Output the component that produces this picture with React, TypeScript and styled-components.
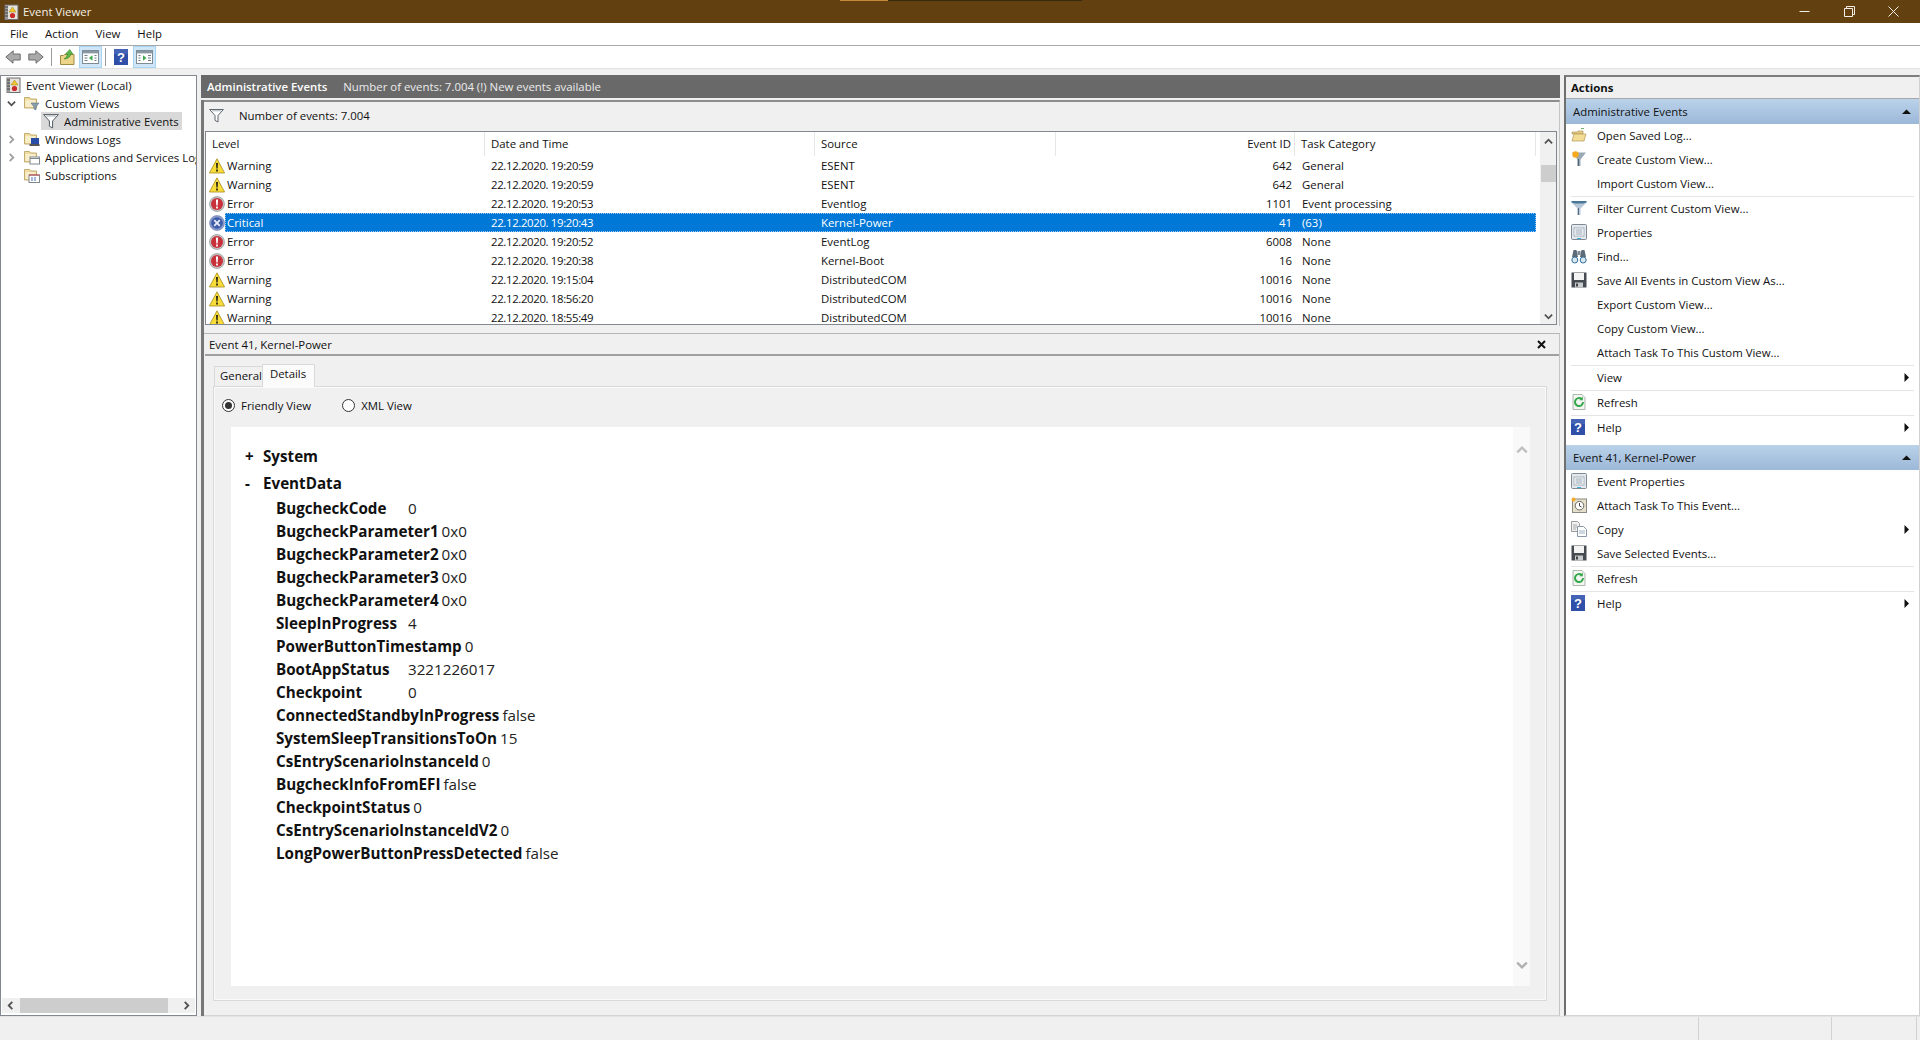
import React from "react";
import styled, { createGlobalStyle } from "styled-components";

const FONT = `"Open Sans", "Noto Sans", "Liberation Sans", sans-serif`;

const GlobalStyle = createGlobalStyle`
  html, body { margin: 0; padding: 0; height: 100%; background: #f0f0f0; overflow: hidden; }
  #root { height: 100%; }
  * { box-sizing: border-box; }
  body { font-family: ${FONT}; font-size: 11.4px; color: #111; }
  svg { display: block; flex: none; }
`;

const Page = styled.div`
  display: flex;
  flex-direction: column;
  height: 1040px;
  width: 1920px;
`;

/* ---- title bar ---- */
const TitleBar = styled.div`
  position: relative;
  flex: none;
  height: 23px;
  background: #63400f;
  color: #f4efe6;
  display: flex;
  align-items: center;
  padding: 0 4px;
  gap: 4px;
`;
const TitleStripe = styled.div<{ $left: number; $width: number; $color: string }>`
  position: absolute;
  top: 0;
  left: ${(p) => p.$left}px;
  width: ${(p) => p.$width}px;
  height: 1px;
  background: ${(p) => p.$color};
`;
const TitleText = styled.span`
  flex: 1;
`;
const WinButtons = styled.div`
  display: flex;
`;
const WinButton = styled.div`
  width: 44.5px;
  height: 23px;
  display: flex;
  align-items: center;
  justify-content: center;
`;

/* ---- menu + toolbar ---- */
const MenuBar = styled.div`
  flex: none;
  height: 23px;
  background: #fff;
  border-bottom: 1px solid #a9a9a9;
  display: flex;
  align-items: center;
  padding: 0 0 2px 3px;
`;
const MenuItem = styled.div`
  padding: 0 7px;
  margin-right: 3px;
`;
const Toolbar = styled.div`
  flex: none;
  height: 23px;
  background: #fff;
  border-bottom: 1px solid #e2e2e2;
  display: flex;
  align-items: center;
  padding-left: 1.5px;
`;
const ToolButton = styled.div<{ $on?: boolean }>`
  width: 23px;
  height: 22px;
  display: flex;
  align-items: center;
  justify-content: center;
  background: ${(p) => (p.$on ? "#cfe6f8" : "transparent")};
  border: 1px solid ${(p) => (p.$on ? "#a9d4f2" : "transparent")};
`;
const ToolSep = styled.div`
  width: 1px;
  height: 18px;
  background: #9a9a9a;
  margin: 0 4px 0 3px;
`;

/* ---- main ---- */
const Body = styled.div`
  flex: 1;
  min-height: 0;
  display: grid;
  grid-template-columns: 197px 1359px 354px;
  column-gap: 4px;
  padding-top: 6px;
`;

/* ---- tree ---- */
const TreePanel = styled.div`
  background: #fff;
  border: 1px solid #828790;
  display: flex;
  flex-direction: column;
  overflow: hidden;
`;
const TreeList = styled.div`
  flex: 1;
`;
const TreeRow = styled.div<{ $indent: number }>`
  height: 18px;
  display: flex;
  align-items: center;
  padding-left: ${(p) => p.$indent}px;
  white-space: nowrap;
`;
const TreeArrow = styled.div`
  flex: none;
  width: 13px;
  display: flex;
  justify-content: center;
  margin-right: 4px;
`;
const TreeLabel = styled.div<{ $sel?: boolean }>`
  flex: none;
  display: flex;
  align-items: center;
  gap: 5px;
  height: 18px;
  padding: 0 3px 0 2px;
  background: ${(p) => (p.$sel ? "#d9d9d9" : "transparent")};
`;
const HScroll = styled.div`
  flex: none;
  height: 15px;
  margin: 0 1px 2px;
  background: #f0f0f0;
  display: flex;
  align-items: center;
  justify-content: space-between;
  padding: 0 4px;
`;
const HThumb = styled.div`
  width: 148px;
  height: 15px;
  background: #cdcdcd;
  margin-right: 9px;
`;

/* ---- centre ---- */
const Center = styled.div`
  display: flex;
  flex-direction: column;
  min-height: 0;
`;
const CenterHead = styled.div`
  flex: none;
  height: 23px;
  background: #696969;
  color: #ececec;
  display: flex;
  align-items: center;
  padding-left: 6px;
  gap: 16px;
`;
const HeadTitle = styled.b`
  color: #fff;
  font-weight: 600;
`;
const CenterStack = styled.div`
  flex: 1;
  min-height: 0;
  margin-top: 2px;
  border-left: 3px solid #777;
  display: flex;
  flex-direction: column;
`;
const ListPane = styled.div`
  flex: none;
  height: 226px;
  border-top: 2px solid #8d8d8d;
  border-right: 1px solid #c4c4c4;
  padding-left: 1px;
  background: #f0f0f0;
`;
const FilterBar = styled.div`
  height: 29px;
  display: flex;
  align-items: center;
  padding: 0 0 2px 4px;
  gap: 15px;
`;
const ListFrame = styled.div`
  height: 194px;
  margin-right: 2px;
  border: 1px solid #828790;
  background: #fff;
  display: flex;
  overflow: hidden;
`;
const ListMain = styled.div`
  flex: 1;
  min-width: 0;
`;
const HeaderRow = styled.div`
  height: 24px;
  display: grid;
  grid-template-columns: 279px 330px 241px 239px 1fr;
`;
const HeaderCell = styled.div<{ $right?: boolean }>`
  display: flex;
  align-items: center;
  justify-content: ${(p) => (p.$right ? "flex-end" : "flex-start")};
  padding: 0 ${(p) => (p.$right ? "3px" : "0")} 2px 6px;
  border-right: 1px solid #e6e6e6;
`;
const EventRow = styled.div`
  height: 19px;
  display: flex;
  align-items: center;
  padding-left: 3px;
  width: 1330px;
`;
const EventBody = styled.div<{ $sel?: boolean }>`
  flex: 1;
  height: 19px;
  display: grid;
  grid-template-columns: 259px 330px 240px 241px 1fr;
  align-items: center;
  padding-bottom: 1px;
  color: ${(p) => (p.$sel ? "#fff" : "#111")};
  background: ${(p) => (p.$sel ? "#0078d7" : "transparent")};
  outline: ${(p) => (p.$sel ? "1px dotted #9cc8ee" : "none")};
  outline-offset: -1px;
`;
const LevelIcon = styled.div`
  width: 16px;
`;
const Cell = styled.div<{ $right?: boolean; $first?: boolean; $tight?: boolean }>`
  padding: 0 ${(p) => (p.$right ? "3px" : "0")} 0 ${(p) => (p.$first ? "2px" : "7px")};
  text-align: ${(p) => (p.$right ? "right" : "left")};
  letter-spacing: ${(p) => (p.$tight ? "-0.35px" : "0")};
  white-space: nowrap;
`;
const VTrack = styled.div`
  flex: none;
  width: 16px;
  background: #f0f0f0;
  display: flex;
  flex-direction: column;
  align-items: center;
  margin-left: 4px;
  padding-top: 5px;
`;
const VThumb = styled.div`
  width: 15px;
  height: 17px;
  background: #cdcdcd;
  margin-top: 19px;
`;
const VEnd = styled.div`
  margin-top: auto;
  margin-bottom: 3px;
`;

const PreviewPane = styled.div`
  flex: 1;
  min-height: 0;
  margin-top: 7px;
  border-top: 1px solid #b5b5b5;
  border-right: 1px solid #c4c4c4;
  border-bottom: 1px solid #d4d4d4;
  padding-left: 1px;
  display: flex;
  flex-direction: column;
`;
const PreviewHead = styled.div`
  flex: none;
  height: 22px;
  border-bottom: 2px solid #a0a0a0;
  display: flex;
  align-items: center;
  justify-content: space-between;
  padding: 0 13px 0 4px;
`;
const Tabs = styled.div`
  flex: none;
  height: 30px;
  padding: 7px 0 0 9px;
  display: flex;
  align-items: flex-end;
`;
const Tab = styled.div<{ $on?: boolean }>`
  height: ${(p) => (p.$on ? 23 : 21)}px;
  padding: ${(p) => (p.$on ? "0 8px 6px 7px" : "0 0 3px 5px")};
  background: ${(p) => (p.$on ? "#fbfbfb" : "#f0f0f0")};
  border: 1px solid #d9d9d9;
  border-bottom: ${(p) => (p.$on ? "none" : "1px solid #d9d9d9")};
  border-right: ${(p) => (p.$on ? "1px solid #d9d9d9" : "none")};
  display: flex;
  align-items: center;
  position: relative;
  top: 1px;
`;
const TabBody = styled.div`
  flex: 1;
  min-height: 0;
  margin: 0 12px 14px 8px;
  border: 1px solid #d9d9d9;
  box-shadow: inset 0 0 0 1px #fafafa;
  padding: 0 16px 14px 0;
  display: flex;
  flex-direction: column;
`;
const RadioRow = styled.div`
  flex: none;
  height: 40px;
  padding: 0 0 4px 8px;
  display: flex;
  align-items: center;
`;
const Radio = styled.label`
  display: flex;
  align-items: center;
  gap: 6px;
  margin-right: 31px;
`;
const RadioDot = styled.span<{ $on?: boolean }>`
  width: 13px;
  height: 13px;
  border-radius: 50%;
  border: 1px solid #333;
  background: #fff;
  display: flex;
  align-items: center;
  justify-content: center;
  &::after {
    content: "";
    width: 7px;
    height: 7px;
    border-radius: 50%;
    background: ${(p) => (p.$on ? "#333" : "transparent")};
  }
`;
const DetailBox = styled.div`
  flex: 1;
  min-height: 0;
  margin-left: 17px;
  background: #fff;
  display: flex;
`;
const DetailContent = styled.div`
  flex: 1;
  padding: 17px 0 0 14px;
`;
const DetailScroll = styled.div`
  flex: none;
  width: 17px;
  background: #f9f9f9;
  display: flex;
  flex-direction: column;
  align-items: center;
  justify-content: space-between;
  padding: 17px 0 15px;
`;
const Section = styled.div<{ $top?: number }>`
  display: flex;
  align-items: center;
  height: 23px;
  margin-top: ${(p) => p.$top ?? 0}px;
  font-size: 15.2px;
  font-weight: 700;
`;
const Sign = styled.span`
  width: 18px;
`;
const DataRows = styled.div`
  padding: 2px 0 0 31px;
`;
const DataRow = styled.div`
  height: 23px;
  display: flex;
  align-items: center;
  font-size: 15.2px;
  white-space: nowrap;
`;
const DataName = styled.span`
  min-width: 129px;
  margin-right: 3px;
  font-weight: 700;
`;
const DataValue = styled.span`
  color: #222;
`;

/* ---- actions ---- */
const ActionsPanel = styled.div`
  border-left: 2px solid #6f6f6f;
  border-top: 2px solid #7d7d7d;
  border-bottom: 1px solid #d4d4d4;
  border-right: 1px solid #d0d0d0;
  background: #fff;
  display: flex;
  flex-direction: column;
  margin-right: -2px;
`;
const ActionsHead = styled.div`
  flex: none;
  height: 22px;
  background: #f0f0f0;
  border-bottom: 1px solid #a8a8a8;
  display: flex;
  align-items: center;
  padding-left: 5px;
  font-weight: 700;
`;
const GroupHead = styled.div`
  flex: none;
  height: 25px;
  background: linear-gradient(#bad2ea, #9cb8d8);
  display: flex;
  align-items: center;
  justify-content: space-between;
  padding: 0 8px 1px 7px;
`;
const ActionRow = styled.div`
  flex: none;
  height: 24px;
  display: flex;
  align-items: center;
  padding: 0 8px 2px 5px;
`;
const ActionIcon = styled.div`
  width: 26px;
`;
const ActionText = styled.div`
  flex: 1;
`;
const ActionSep = styled.div`
  flex: none;
  height: 1px;
  margin: 0 5px;
  background: #e5e5e5;
`;
const GroupGap = styled.div`
  flex: none;
  height: 5px;
`;

/* ---- status ---- */
const StatusBar = styled.div`
  flex: none;
  height: 24px;
  background: #f0f0f0;
  border-top: 1px solid #e3e3e3;
  display: grid;
  grid-template-columns: 1699px 133px 85px 3px;
`;
const StatusCell = styled.div`
  border-right: 1px solid #d2d2d2;
`;

/* ---- icons ---- */
const Warning = () => (
  <svg width="16" height="16" viewBox="0 0 16 16">
    <path d="M8 .8 15.6 15H.4z" fill="#f7dc3a" stroke="#a58a1c" strokeWidth=".8" strokeLinejoin="round" />
    <path d="M7.1 5h1.8l-.3 5.6H7.4zM7.2 11.6h1.6v1.8H7.2z" fill="#111" />
  </svg>
);
const ErrorIco = () => (
  <svg width="16" height="16" viewBox="0 0 16 16">
    <circle cx="8" cy="8" r="7.5" fill="#c4c4c4" stroke="#8a8a8a" strokeWidth=".6" />
    <circle cx="8" cy="8" r="6" fill="#c8303a" />
    <path d="M6.9 3.4h2.2L8.7 9.5H7.3zM7.1 10.5h1.8v1.9H7.1z" fill="#fff" />
  </svg>
);
const Critical = () => (
  <svg width="16" height="16" viewBox="0 0 16 16">
    <circle cx="8" cy="8" r="7.5" fill="#8a9ccc" stroke="#6f7fa8" strokeWidth=".6" />
    <circle cx="8" cy="8" r="5.8" fill="#3f5caa" />
    <path d="M5.2 5.2l5.6 5.6M10.8 5.2l-5.6 5.6" stroke="#e8ecf6" strokeWidth="1.8" />
  </svg>
);
const AppIco = () => (
  <svg width="15" height="16" viewBox="0 0 15 16">
    <rect x="1" y="1" width="13" height="14.5" fill="#e4e2da" stroke="#6d6d6d" />
    <path d="M1 1h3v14.5H1z" fill="#9a9a9a" />
    <path d="M1 3h3M1 6h3M1 9h3M1 12h3" stroke="#444" />
    <path d="M8.5 3 12 8H5z" fill="#f2c72e" stroke="#9b7f1a" strokeWidth=".5" />
    <circle cx="8.5" cy="11.5" r="2.6" fill="#cb2a2a" />
  </svg>
);
const Folder = ({ children }: { children?: React.ReactNode }) => (
  <svg width="16" height="16" viewBox="0 0 16 16">
    <path d="M.5 2.5h5l1 1.5h6v9H.5z" fill="#f0dda0" stroke="#b49a58" strokeWidth=".8" />
    <path d="M1.5 5h10v7h-10z" fill="#f8efca" />
    {children}
  </svg>
);
const FunnelOutline = ({ size = 15 }: { size?: number }) => (
  <svg width={size} height={size} viewBox="0 0 15 15">
    <path d="M.6 1.5h13.8L9 7.5V14l-3-1.6V7.5z" fill="#fff" stroke="#4c565e" strokeWidth=".9" />
    <path d="M3 2.8h9" stroke="#aab4bc" />
  </svg>
);
const FunnelBlue = () => (
  <svg width="16" height="16" viewBox="0 0 16 16">
    <path d="M.5 1h15v1.4L9.5 8.5V15h-3V8.5L.5 2.4z" fill="#b7c9d8" />
    <path d="M.5 1h15v1.4L12 3.5H4L.5 2.4z" fill="#4a7898" />
    <path d="M6.8 8h1.2v7H6.8z" fill="#557086" />
  </svg>
);
const FunnelStar = () => (
  <svg width="16" height="16" viewBox="0 0 16 16">
    <path d="M1 1.5h14L9.5 8.5V15h-3V8.5z" fill="#9aa9b4" />
    <path d="M6.8 8h1.2v7H6.8z" fill="#4e6476" />
    <circle cx="4.5" cy="3.5" r="3.2" fill="#f6a91e" />
  </svg>
);
const OpenFolder = () => (
  <svg width="16" height="16" viewBox="0 0 16 16">
    <path d="M1 5h5l1-1h5v3H1z" fill="#e5cb83" stroke="#a98f4f" strokeWidth=".6" />
    <path d="M3 7h12l-2 7H1z" fill="#f3dd96" stroke="#b39a56" strokeWidth=".7" />
    <path d="M10 1.5h3" stroke="#6fb56c" />
  </svg>
);
const Props = () => (
  <svg width="16" height="16" viewBox="0 0 16 16">
    <rect x=".5" y=".5" width="15" height="15" rx="1" fill="#e2e8ed" stroke="#7f8a93" />
    <rect x="3" y="4" width="10" height="8" fill="#fff" stroke="#8a97a1" strokeWidth=".7" />
    <path d="M4.5 6h7M4.5 8h7M4.5 10h7" stroke="#73889a" strokeWidth=".8" />
    <path d="M6 14.5h4" stroke="#40b0dc" />
  </svg>
);
const Binoc = () => (
  <svg width="16" height="16" viewBox="0 0 16 16">
    <path d="M1 9l1.5-7h3L7 9zM9 9l1.5-7h3L15 9z" fill="#5d6b78" />
    <rect x="6.4" y="3" width="3.2" height="4" fill="#7e8c98" />
    <circle cx="3.8" cy="12" r="3" fill="#d8e6f0" stroke="#33709e" />
    <circle cx="12.2" cy="12" r="3" fill="#d8e6f0" stroke="#33709e" />
  </svg>
);
const Floppy = () => (
  <svg width="16" height="16" viewBox="0 0 16 16">
    <path d="M.5.5h15v15H.5z" fill="#454b50" />
    <rect x="3" y="1" width="10" height="7" fill="#f4f4f4" />
    <rect x="4" y="10.5" width="8" height="5" fill="#c9cccf" />
    <rect x="5" y="11.5" width="2" height="3" fill="#444" />
  </svg>
);
const RefreshIco = () => (
  <svg width="16" height="16" viewBox="0 0 16 16">
    <path d="M2 .5h9l3 3v12H2z" fill="#f3f6f2" stroke="#9aa79a" strokeWidth=".8" />
    <path d="M12 8a4 4 0 1 1-1.4-3" fill="none" stroke="#35a84a" strokeWidth="2" />
    <path d="M11.8 2.6v3.6H8.4z" fill="#35a84a" />
  </svg>
);
const HelpIco = ({ size = 16 }: { size?: number }) => (
  <svg width={size - 2} height={size} viewBox="0 0 14 16">
    <rect width="14" height="16" fill="#2f4fa8" />
    <rect x="0" y="0" width="14" height="5" fill="#5b78c4" opacity=".5" />
    <text x="7" y="13" textAnchor="middle" fontSize="13" fontWeight="700" fill="#fff" fontFamily="Liberation Sans, sans-serif">
      ?
    </text>
  </svg>
);
const Clock = () => (
  <svg width="16" height="16" viewBox="0 0 16 16">
    <rect x="1.5" y="2" width="14" height="13.5" fill="#e6dfcc" stroke="#8a8a80" />
    <circle cx="8.5" cy="8.7" r="4.3" fill="#fff" stroke="#66665e" />
    <path d="M8.5 6v3l2 1" stroke="#444" fill="none" />
    <circle cx="2.5" cy="2.5" r="2" fill="#f4a826" />
  </svg>
);
const CopyIco = () => (
  <svg width="16" height="16" viewBox="0 0 16 16">
    <path d="M.5.5h6l2 2v8h-8z" fill="#f2f2f2" stroke="#9a9a9a" />
    <path d="M6.5 5.5h6l3 3v7h-9z" fill="#fff" stroke="#8a98a8" />
    <path d="M8 10h6M8 12h6" stroke="#9fb2c4" />
    <path d="M2 4h4M2 6h4M2 8h3" stroke="#a8a8a8" />
  </svg>
);
const BackArrow = ({ flip }: { flip?: boolean }) => (
  <svg width="16" height="14" viewBox="0 0 16 14">
    <path
      d={flip ? "M.8 4h7V.8L15.2 7 8 13.2V10H.8z" : "M15.2 4h-7V.8L.8 7 8 13.2V10h7.2z"}
      fill="#a9a9a9"
      stroke="#6e6e6e"
    />
  </svg>
);
const UpFolder = () => (
  <svg width="15" height="16" viewBox="0 0 15 16">
    <path d="M.5 6.5h3l1-1h9.5v10H.5z" fill="#ecd488" stroke="#a08a46" />
    <path d="M4 10c2-1 3-3 3.5-5L5.5 5 9.8.4 13 5.2l-2.2-.2C10.4 8 8 10 4 10z" fill="#5ab54a" stroke="#33802c" strokeWidth=".5" />
  </svg>
);
const PaneIco = ({ right }: { right?: boolean }) => (
  <svg width="17" height="14" viewBox="0 0 17 14">
    <rect x=".5" y=".5" width="16" height="13" fill="#fff" stroke="#7e8c96" />
    <rect x="1" y="1" width="15" height="2.4" fill="#8a98a4" />
    {right ? (
      <>
        <path d="M2.5 5.5h2M2.5 8h2M2.5 10.5h2M12 5.5h3M12 8h3M12 10.5h3" stroke="#6f7d88" />
        <path d="M7 5.2v5.6L10.4 8z" fill="#3aa84a" />
      </>
    ) : (
      <>
        <path d="M2.5 5.5h3M2.5 8h3M2.5 10.5h3M12.5 5.5h2M12.5 8h2M12.5 10.5h2" stroke="#6f7d88" />
        <path d="M10.5 5.2v5.6L7 8z" fill="#3aa84a" />
      </>
    )}
  </svg>
);
const Chevron = ({ dir, color = "#505050", size = 9 }: { dir: "up" | "down" | "left" | "right"; color?: string; size?: number }) => {
  const d = { up: "M1 7 5 3l4 4", down: "M1 3l4 4 4-4", left: "M7 1 3 5l4 4", right: "M3 1l4 4-4 4" }[dir];
  return (
    <svg width={size} height={size} viewBox="0 0 10 10">
      <path d={d} fill="none" stroke={color} strokeWidth="2" />
    </svg>
  );
};
const Tri = ({ right }: { right?: boolean }) => (
  <svg width="9" height="9" viewBox="0 0 9 9">
    <path d={right ? "M2.5 0v9L7 4.5z" : "M0 7h9L4.5 2.5z"} fill="#111" />
  </svg>
);

const events = [
  ["Warning", "19:20:59", "ESENT", "642", "General"],
  ["Warning", "19:20:59", "ESENT", "642", "General"],
  ["Error", "19:20:53", "Eventlog", "1101", "Event processing"],
  ["Critical", "19:20:43", "Kernel-Power", "41", "(63)"],
  ["Error", "19:20:52", "EventLog", "6008", "None"],
  ["Error", "19:20:38", "Kernel-Boot", "16", "None"],
  ["Warning", "19:15:04", "DistributedCOM", "10016", "None"],
  ["Warning", "18:56:20", "DistributedCOM", "10016", "None"],
  ["Warning", "18:55:49", "DistributedCOM", "10016", "None"],
];

const details = [
  ["BugcheckCode", "0"],
  ["BugcheckParameter1", "0x0"],
  ["BugcheckParameter2", "0x0"],
  ["BugcheckParameter3", "0x0"],
  ["BugcheckParameter4", "0x0"],
  ["SleepInProgress", "4"],
  ["PowerButtonTimestamp", "0"],
  ["BootAppStatus", "3221226017"],
  ["Checkpoint", "0"],
  ["ConnectedStandbyInProgress", "false"],
  ["SystemSleepTransitionsToOn", "15"],
  ["CsEntryScenarioInstanceId", "0"],
  ["BugcheckInfoFromEFI", "false"],
  ["CheckpointStatus", "0"],
  ["CsEntryScenarioInstanceIdV2", "0"],
  ["LongPowerButtonPressDetected", "false"],
];

type Action = { text?: string; icon?: React.ReactNode; more?: boolean };

const adminActions: Action[] = [
  { text: "Open Saved Log...", icon: <OpenFolder /> },
  { text: "Create Custom View...", icon: <FunnelStar /> },
  { text: "Import Custom View..." },
  {},
  { text: "Filter Current Custom View...", icon: <FunnelBlue /> },
  { text: "Properties", icon: <Props /> },
  { text: "Find...", icon: <Binoc /> },
  { text: "Save All Events in Custom View As...", icon: <Floppy /> },
  { text: "Export Custom View..." },
  { text: "Copy Custom View..." },
  { text: "Attach Task To This Custom View..." },
  {},
  { text: "View", more: true },
  {},
  { text: "Refresh", icon: <RefreshIco /> },
  {},
  { text: "Help", icon: <HelpIco />, more: true },
];

const eventActions: Action[] = [
  { text: "Event Properties", icon: <Props /> },
  { text: "Attach Task To This Event...", icon: <Clock /> },
  { text: "Copy", icon: <CopyIco />, more: true },
  { text: "Save Selected Events...", icon: <Floppy /> },
  {},
  { text: "Refresh", icon: <RefreshIco /> },
  {},
  { text: "Help", icon: <HelpIco />, more: true },
];

const ActionList = ({ items }: { items: Action[] }) => (
  <>
    {items.map((a, i) =>
      a.text ? (
        <ActionRow key={i}>
          <ActionIcon>{a.icon}</ActionIcon>
          <ActionText>{a.text}</ActionText>
          {a.more && <Tri right />}
        </ActionRow>
      ) : (
        <ActionSep key={i} />
      ),
    )}
  </>
);

const levelIcon = (level: string) => {
  if (level === "Warning") return <Warning />;
  if (level === "Error") return <ErrorIco />;
  return <Critical />;
};

const App = () => {
  return (
    <Page>
      <GlobalStyle />
      <TitleBar>
        <TitleStripe $left={840} $width={48} $color="#c68a3a" />
        <TitleStripe $left={888} $width={194} $color="#3a2a10" />
        <AppIco />
        <TitleText>Event Viewer</TitleText>
        <WinButtons>
          <WinButton>
            <svg width="11" height="11" viewBox="0 0 11 11">
              <path d="M.5 5.5h10" stroke="#f4efe6" />
            </svg>
          </WinButton>
          <WinButton>
            <svg width="11" height="11" viewBox="0 0 11 11">
              <path d="M.5 2.5h8v8h-8zM2.5 2.5v-2h8v8h-2" fill="none" stroke="#f4efe6" />
            </svg>
          </WinButton>
          <WinButton>
            <svg width="11" height="11" viewBox="0 0 11 11">
              <path d="M.5.5l10 10M10.5.5l-10 10" stroke="#f4efe6" />
            </svg>
          </WinButton>
        </WinButtons>
      </TitleBar>

      <MenuBar>
        {["File", "Action", "View", "Help"].map((m) => (
          <MenuItem key={m}>{m}</MenuItem>
        ))}
      </MenuBar>

      <Toolbar>
        <ToolButton>
          <BackArrow />
        </ToolButton>
        <ToolButton>
          <BackArrow flip />
        </ToolButton>
        <ToolSep />
        <ToolButton>
          <UpFolder />
        </ToolButton>
        <ToolButton $on>
          <PaneIco />
        </ToolButton>
        <ToolSep />
        <ToolButton>
          <HelpIco />
        </ToolButton>
        <ToolButton $on>
          <PaneIco right />
        </ToolButton>
      </Toolbar>

      <Body>
        <TreePanel>
          <TreeList>
            <TreeRow $indent={3}>
              <TreeLabel>
                <AppIco />
                Event Viewer (Local)
              </TreeLabel>
            </TreeRow>
            <TreeRow $indent={4}>
              <TreeArrow>
                <Chevron dir="down" />
              </TreeArrow>
              <TreeLabel>
                <Folder>
                  <path d="M7 8h8l-3 4v3l-2-1v-2z" fill="#8aa0b0" stroke="#4f6374" strokeWidth=".5" />
                </Folder>
                Custom Views
              </TreeLabel>
            </TreeRow>
            <TreeRow $indent={40}>
              <TreeLabel $sel>
                <FunnelOutline size={16} />
                Administrative Events
              </TreeLabel>
            </TreeRow>
            <TreeRow $indent={4}>
              <TreeArrow>
                <Chevron dir="right" color="#a0a0a0" />
              </TreeArrow>
              <TreeLabel>
                <Folder>
                  <rect x="7" y="7" width="8" height="6" fill="#2a4ea8" />
                  <path d="M5.5 13h10v2h-10z" fill="#555" />
                </Folder>
                Windows Logs
              </TreeLabel>
            </TreeRow>
            <TreeRow $indent={4}>
              <TreeArrow>
                <Chevron dir="right" color="#a0a0a0" />
              </TreeArrow>
              <TreeLabel>
                <Folder>
                  <rect x="6" y="8" width="9.5" height="7" fill="#fff" stroke="#808890" />
                  <path d="M6 9.5h9.5" stroke="#808890" />
                </Folder>
                Applications and Services Logs
              </TreeLabel>
            </TreeRow>
            <TreeRow $indent={21}>
              <TreeLabel>
                <Folder>
                  <rect x="5" y="8" width="10.5" height="7.5" fill="#fff" stroke="#808890" />
                  <path d="M7 11h2M10 11h2M7 13h2M10 13h2" stroke="#4a70c0" />
                  <path d="M5 8h10.5" stroke="#c04040" />
                </Folder>
                Subscriptions
              </TreeLabel>
            </TreeRow>
          </TreeList>
          <HScroll>
            <Chevron dir="left" />
            <HThumb />
            <Chevron dir="right" />
          </HScroll>
        </TreePanel>

        <Center>
          <CenterHead>
            <HeadTitle>Administrative Events</HeadTitle>
            <span>Number of events: 7.004 (!) New events available</span>
          </CenterHead>
          <CenterStack>
            <ListPane>
              <FilterBar>
                <FunnelOutline />
                <span>Number of events: 7.004</span>
              </FilterBar>
              <ListFrame>
                <ListMain>
                  <HeaderRow>
                    <HeaderCell>Level</HeaderCell>
                    <HeaderCell>Date and Time</HeaderCell>
                    <HeaderCell>Source</HeaderCell>
                    <HeaderCell $right>Event ID</HeaderCell>
                    <HeaderCell>Task Category</HeaderCell>
                  </HeaderRow>
                  {events.map(([level, time, source, id, task], i) => (
                    <EventRow key={i}>
                      <LevelIcon>{levelIcon(level)}</LevelIcon>
                      <EventBody $sel={level === "Critical"}>
                        <Cell $first>{level}</Cell>
                        <Cell $tight>22.12.2020. {time}</Cell>
                        <Cell>{source}</Cell>
                        <Cell $right>{id}</Cell>
                        <Cell>{task}</Cell>
                      </EventBody>
                    </EventRow>
                  ))}
                </ListMain>
                <VTrack>
                  <Chevron dir="up" />
                  <VThumb />
                  <VEnd>
                    <Chevron dir="down" />
                  </VEnd>
                </VTrack>
              </ListFrame>
            </ListPane>

            <PreviewPane>
              <PreviewHead>
                <span>Event 41, Kernel-Power</span>
                <svg width="9" height="9" viewBox="0 0 9 9">
                  <path d="M1 1l7 7M8 1 1 8" stroke="#111" strokeWidth="2" />
                </svg>
              </PreviewHead>
              <Tabs>
                <Tab>General</Tab>
                <Tab $on>Details</Tab>
              </Tabs>
              <TabBody>
                <RadioRow>
                  <Radio>
                    <RadioDot $on />
                    Friendly View
                  </Radio>
                  <Radio>
                    <RadioDot />
                    XML View
                  </Radio>
                </RadioRow>
                <DetailBox>
                  <DetailContent>
                    <Section>
                      <Sign>+</Sign>System
                    </Section>
                    <Section $top={4}>
                      <Sign>-</Sign>EventData
                    </Section>
                    <DataRows>
                      {details.map(([name, value]) => (
                        <DataRow key={name}>
                          <DataName>{name}</DataName>
                          <DataValue>{value}</DataValue>
                        </DataRow>
                      ))}
                    </DataRows>
                  </DetailContent>
                  <DetailScroll>
                    <Chevron dir="up" color="#c0c0c0" size={12} />
                    <Chevron dir="down" color="#b0b0b0" size={12} />
                  </DetailScroll>
                </DetailBox>
              </TabBody>
            </PreviewPane>
          </CenterStack>
        </Center>

        <ActionsPanel>
          <ActionsHead>Actions</ActionsHead>
          <GroupHead>
            Administrative Events
            <Tri />
          </GroupHead>
          <ActionList items={adminActions} />
          <GroupGap />
          <GroupHead>
            Event 41, Kernel-Power
            <Tri />
          </GroupHead>
          <ActionList items={eventActions} />
        </ActionsPanel>
      </Body>

      <StatusBar>
        <StatusCell />
        <StatusCell />
        <StatusCell />
      </StatusBar>
    </Page>
  );
};

export default App;
